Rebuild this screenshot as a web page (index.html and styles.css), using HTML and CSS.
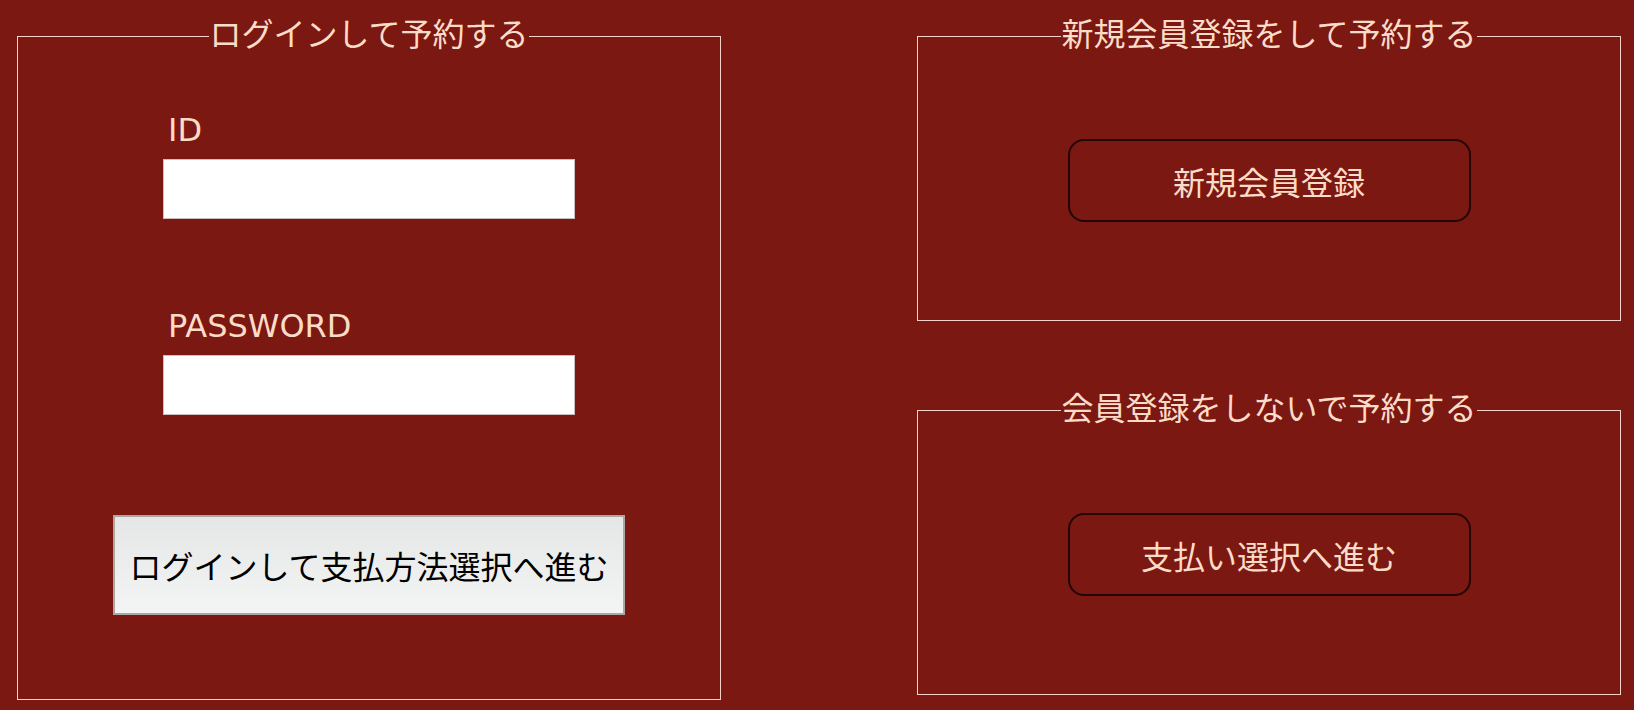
FILE: index.html
```html
<!DOCTYPE html>
<html lang="ja">
<head>
<meta charset="utf-8">
<title>予約</title>
<link rel="stylesheet" href="styles.css">
</head>
<body>
<div class="page">
  <fieldset class="box box-login">
    <legend>ログインして予約する</legend>
    <div class="login-form">
      <label class="field-label" for="login-id">ID</label>
      <input class="field-input" id="login-id" type="text">
      <label class="field-label pw-label" for="login-pw">PASSWORD</label>
      <input class="field-input" id="login-pw" type="password">
    </div>
    <button class="login-btn" type="button">ログインして支払方法選択へ進む</button>
  </fieldset>
  <div class="right-col">
    <fieldset class="box box-small">
      <legend>新規会員登録をして予約する</legend>
      <button class="outline-btn" type="button">新規会員登録</button>
    </fieldset>
    <fieldset class="box box-small">
      <legend>会員登録をしないで予約する</legend>
      <button class="outline-btn" type="button">支払い選択へ進む</button>
    </fieldset>
  </div>
</div>
</body>
</html>
```

FILE: styles.css
```css
html, body {
  margin: 0;
  padding: 0;
}

body {
  background: #7b1812;
  color: #fbdcc8;
  font-family: "Noto Sans CJK JP", sans-serif;
  width: 1634px;
  height: 710px;
  overflow: hidden;
}

.page {
  display: flex;
  align-items: flex-start;
  gap: 196px;
  padding: 13px 0 0 17px;
}

.box {
  margin: 0;
  padding: 0;
  width: 704px;
  box-sizing: border-box;
  border: 1px solid #f6d2ca;
  display: flex;
  flex-direction: column;
  align-items: center;
  min-inline-size: 0;
}

.box legend {
  margin: 0 auto;
  padding: 0 0 8px;
  font-family: "Noto Sans CJK JP", sans-serif;
  font-size: 32px;
  line-height: 39px;
  color: #fbdcc8;
}

.box-login {
  height: 687px;
}

.login-form {
  width: 412px;
  margin-top: 50px;
  display: flex;
  flex-direction: column;
}

.field-label {
  font-family: "DejaVu Sans", "Noto Sans CJK JP", sans-serif;
  font-size: 32px;
  line-height: 40px;
  padding-left: 5px;
  color: #fbdcc8;
}

.pw-label {
  margin-top: 87px;
}

.field-input {
  margin: 9px 0 0;
  height: 60px;
  box-sizing: border-box;
  border: 1px solid #cdbdbd;
  background: #ffffff;
  padding: 0 8px;
  font-size: 24px;
  outline: none;
}

.login-btn {
  margin-top: 100px;
  width: 512px;
  height: 100px;
  box-sizing: border-box;
  padding: 0;
  border: 2px solid #aca6a6;
  background: linear-gradient(#e5e7e7, #f3f4f4);
  color: #000000;
  font-family: "Noto Sans CJK JP", sans-serif;
  font-size: 32px;
  cursor: pointer;
}

.right-col {
  display: flex;
  flex-direction: column;
  gap: 66px;
}

.box-small {
  height: 308px;
}

.outline-btn {
  margin-top: 79px;
  width: 403px;
  height: 83px;
  box-sizing: border-box;
  padding: 0;
  border: 2px solid #230505;
  border-radius: 16px;
  background: transparent;
  color: #fbdcc8;
  font-family: "Noto Sans CJK JP", sans-serif;
  font-size: 32px;
  cursor: pointer;
}
```
